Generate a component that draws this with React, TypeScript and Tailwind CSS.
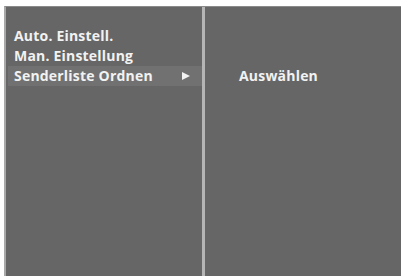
import React from 'react';

const items = ['Auto. Einstell.', 'Man. Einstellung', 'Senderliste Ordnen'];

export default function App() {
  return (
    <div
      className="w-[401px] h-[276px] bg-white pt-[6px] pl-[4px] overflow-hidden"
      style={{ fontFamily: '"Open Sans", "DejaVu Sans", sans-serif' }}
    >
      <div className="flex h-full bg-[#666666] border-l-2 border-[#a9a9a9] border-t border-t-[#8a8a8a]">
        {/* left menu */}
        <div className="w-[196px] pt-[19px] pl-[2px]">
          {items.map((label, i) => (
            <div
              key={label}
              className={`flex items-center h-[20px] pl-[6px] pr-[10px] text-[14px] font-bold tracking-[0.2px] text-[#f2f2f2] leading-none ${
                i === 2 ? 'bg-[#717171]' : ''
              }`}
            >
              <span className="flex-1">{label}</span>
              {i === 2 && (
                <svg width="8" height="8" viewBox="0 0 8 8" className="mr-[2px]">
                  <path d="M0 0 L8 4 L0 8 Z" fill="#f2f2f2" />
                </svg>
              )}
            </div>
          ))}
        </div>
        {/* divider */}
        <div className="w-[3px] bg-[#b5b5b5]" />
        {/* right panel */}
        <div className="flex-1 pt-[59px] pl-[34px]">
          <div className="flex items-center h-[20px] text-[14px] font-bold tracking-[0.2px] text-[#f2f2f2] leading-none">
            Auswählen
          </div>
        </div>
      </div>
    </div>
  );
}
